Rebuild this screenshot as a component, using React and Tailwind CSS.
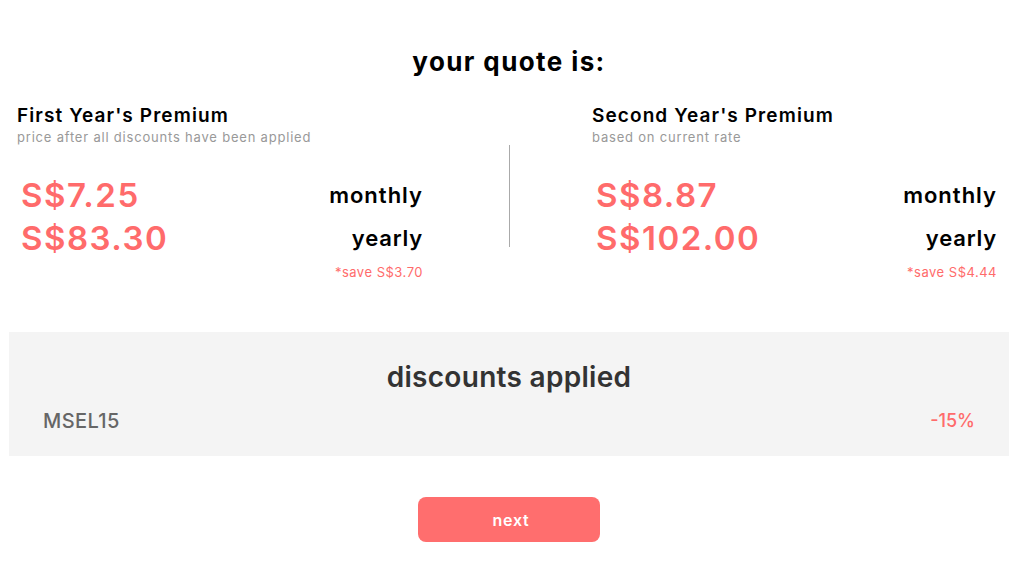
export default function App() {
  const coral = "text-[#ff6b6b]";
  return (
    <div className="w-[1018px] h-[568px] bg-white overflow-hidden" style={{ fontFamily: "Inter, 'Noto Sans', sans-serif" }}>
      <h1 className="pt-[44px] text-center text-[26px] leading-[36px] font-bold text-black tracking-[1.4px]">your quote is:</h1>
      <div className="flex mt-[24px]">
        <div className="ml-[17px] w-[406px]">
          <div className="text-[19px] leading-[24px] font-semibold text-black tracking-[1.1px]">First Year's Premium</div>
          <div className="text-[13px] leading-[18px] text-[#999] tracking-[0.8px]">price after all discounts have been applied</div>
          <div className="mt-[28px] flex justify-between items-center">
            <span className={`text-[33px] leading-[43px] font-semibold ${coral} pl-[4px] tracking-[1.5px]`}>S$7.25</span>
            <span className="text-[22px] font-semibold text-black tracking-[1px]">monthly</span>
          </div>
          <div className="flex justify-between items-center">
            <span className={`text-[33px] leading-[43px] font-semibold ${coral} pl-[4px] tracking-[1.5px]`}>S$83.30</span>
            <span className="text-[22px] font-semibold text-black tracking-[0.8px]">yearly</span>
          </div>
          <div className={`text-right text-[13px] leading-[18px] mt-[3px] tracking-[0.5px] ${coral}`}>*save S$3.70</div>
        </div>
        <div className="ml-[86px] mr-[82px] mt-[41px] w-px h-[102px] bg-[#aaa]" />
        <div className="w-[405px]">
          <div className="text-[19px] leading-[24px] font-semibold text-black tracking-[1.1px]">Second Year's Premium</div>
          <div className="text-[13px] leading-[18px] text-[#999] tracking-[0.8px]">based on current rate</div>
          <div className="mt-[28px] flex justify-between items-center">
            <span className={`text-[33px] leading-[43px] font-semibold ${coral} pl-[4px] tracking-[1.5px]`}>S$8.87</span>
            <span className="text-[22px] font-semibold text-black tracking-[1px]">monthly</span>
          </div>
          <div className="flex justify-between items-center">
            <span className={`text-[33px] leading-[43px] font-semibold ${coral} pl-[4px] tracking-[1.5px]`}>S$102.00</span>
            <span className="text-[22px] font-semibold text-black tracking-[0.8px]">yearly</span>
          </div>
          <div className={`text-right text-[13px] leading-[18px] mt-[3px] tracking-[0.5px] ${coral}`}>*save S$4.44</div>
        </div>
      </div>
      <div className="mt-[51px] ml-[9px] w-[1000px] h-[124px] bg-[#f4f4f4] pt-[27px] px-[34px]">
        <div className="text-center text-[28px] leading-[36px] font-semibold text-[#333] tracking-[0.3px]">discounts applied</div>
        <div className="mt-[14px] flex justify-between items-center leading-[24px] font-medium">
          <span className="text-[#666] text-[20px] tracking-[0.4px]">MSEL15</span>
          <span className={`${coral} text-[18px]`}>-15%</span>
        </div>
      </div>
      <div className="flex justify-center mt-[41px]">
        <button className="w-[182px] h-[45px] rounded-[8px] bg-[#ff6e6e] text-white text-[16px] font-semibold tracking-[0.8px] pl-[4px]">next</button>
      </div>
    </div>
  );
}
